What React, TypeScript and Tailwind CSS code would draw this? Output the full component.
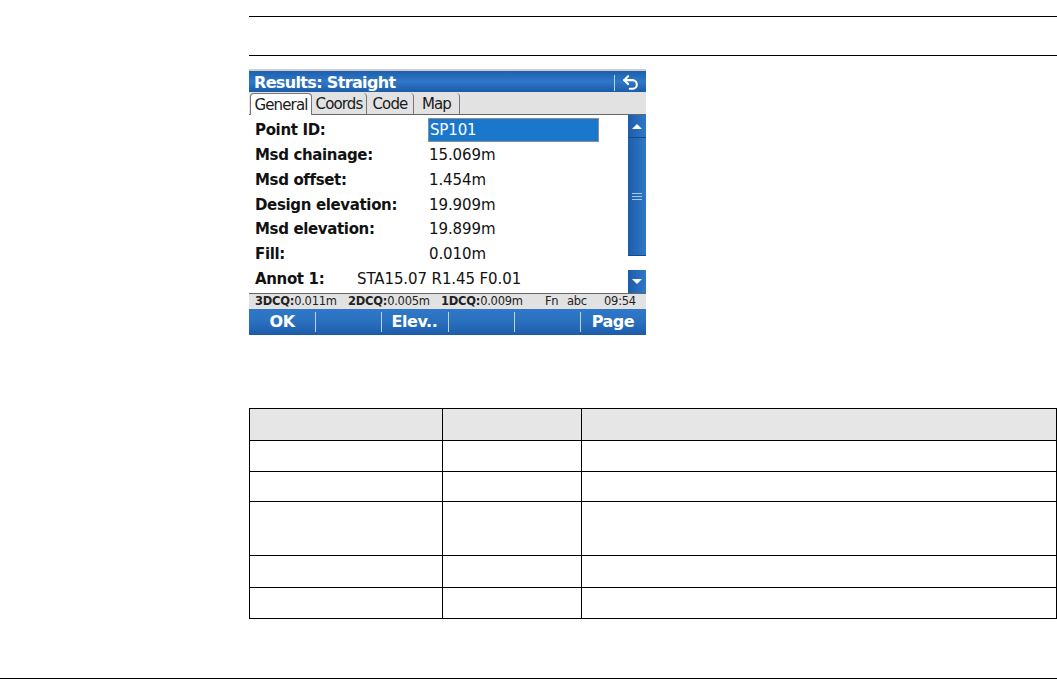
import { Undo2 } from "lucide-react";

const rows = [
  { label: "Point ID:", value: "" },
  { label: "Msd chainage:", value: "15.069m" },
  { label: "Msd offset:", value: "1.454m" },
  { label: "Design elevation:", value: "19.909m" },
  { label: "Msd elevation:", value: "19.899m" },
  { label: "Fill:", value: "0.010m" },
];

const softkeys = ["OK", "", "Elev..", "", "", "Page"];
const tabs = [
  { name: "Coords", width: "w-[55px]" },
  { name: "Code", width: "w-[47px]" },
  { name: "Map", width: "w-[46px]" },
];
const tableRows = ["h-[31px]", "h-[30px]", "h-[54px]", "h-[32px]", "h-[31px]"];

function Device() {
  return (
    <div className="w-[397px] h-[266px] flex flex-col bg-white font-['DejaVu_Sans',sans-serif]">
      <div className="h-[23px] flex items-center justify-between pl-[5px] pt-[2px] bg-gradient-to-b from-[#1d5fae] via-[#2f78c8] to-[#1b5ba8] text-white text-[16px] font-bold border-t-2 border-[#cfcfcf]">
        <span className="tracking-[-0.65px]">Results: Straight</span>
        <div className="flex items-center h-full">
          <div className="w-px h-[16px] bg-[#b8d4f0]" />
          <Undo2 className="w-[21px] h-[19px] mx-[5px] text-white" strokeWidth={2.6} />
        </div>
      </div>

      <div className="h-[23px] flex items-end bg-[#e2e2e2] border-b border-[#666666] pl-[1px] text-[15px] text-[#1a1a1a] tracking-[-0.85px]">
        <div className="w-[62px] h-[22px] -mb-px pt-[2px] flex items-center justify-center bg-white border border-b-0 border-[#777777] rounded-t-[4px]">
          General
        </div>
        {tabs.map((tab) => (
          <div
            key={tab.name}
            className={`${tab.width} h-[21px] pt-[2px] flex items-center justify-center border-r border-[#777777] rounded-tr-[4px]`}
          >
            {tab.name}
          </div>
        ))}
      </div>

      <div className="h-[178px] flex">
        <div className="w-[379px] pt-[3px] text-[#111111]">
          {rows.map((row, i) => (
            <div key={row.label} className="h-[24.8px] flex items-center pl-[6px] text-[15px]">
              <span className="w-[173px] font-bold tracking-[-0.35px]">{row.label}</span>
              {i === 0 ? (
                <div className="w-[171px] h-[24px] pl-[1px] flex items-center bg-[#1a78cc] border border-[#8a8f96] text-white text-[15px] tracking-[-0.15px]">
                  SP101
                </div>
              ) : (
                <span className="pl-[1px] tracking-[-0.1px]">{row.value}</span>
              )}
            </div>
          ))}
          <div className="h-[24.8px] flex items-center pl-[6px] text-[15px]">
            <span className="w-[102px] font-bold tracking-[-0.35px]">Annot 1:</span>
            <span className="tracking-[-0.1px]">STA15.07 R1.45 F0.01</span>
          </div>
        </div>

        <div className="w-[18px] flex flex-col">
          <div className="h-[23px] flex items-center justify-center bg-gradient-to-r from-[#1c5dab] to-[#2f78c8] border-b border-[#164a8a]">
            <div className="w-0 h-0 border-x-[5px] border-x-transparent border-b-[5px] border-b-white" />
          </div>
          <div className="h-[118px] flex flex-col items-center justify-center gap-[2px] bg-gradient-to-r from-[#1c5dab] to-[#2f78c8] border-b border-[#164a8a]">
            <div className="w-[10px] h-px bg-[#a9c9ea]" />
            <div className="w-[10px] h-px bg-[#a9c9ea]" />
            <div className="w-[10px] h-px bg-[#a9c9ea]" />
          </div>
          <div className="h-[14px] bg-white" />
          <div className="flex-1 flex items-center justify-center bg-gradient-to-r from-[#1c5dab] to-[#2f78c8]">
            <div className="w-0 h-0 border-x-[5px] border-x-transparent border-t-[5px] border-t-white" />
          </div>
        </div>
      </div>

      <div className="h-[16px] flex items-center pl-[6px] bg-[#e2e2e2] border-t border-[#666666] text-[11.5px] text-[#222222] tracking-[-0.25px] whitespace-nowrap">
        <span className="w-[93px]">
          <b>3DCQ:</b>0.011m
        </span>
        <span className="w-[93px]">
          <b>2DCQ:</b>0.005m
        </span>
        <span className="w-[104px]">
          <b>1DCQ:</b>0.009m
        </span>
        <span className="w-[22px]">Fn</span>
        <span className="w-[37px]">abc</span>
        <span>09:54</span>
      </div>

      <div className="flex-1 flex bg-gradient-to-b from-[#2f78c8] via-[#2a70bf] to-[#1b5ba8] text-white text-[16px] font-bold">
        {softkeys.map((key, i) => (
          <div key={i} className="flex-1 flex items-center justify-center relative tracking-[-0.45px]">
            {key}
            {i < softkeys.length - 1 && (
              <div className="absolute -right-px top-[3px] bottom-[3px] w-px bg-[#b8d4f0]" />
            )}
          </div>
        ))}
      </div>
    </div>
  );
}

export default function App() {
  return (
    <div className="h-[679px] w-[1057px] flex flex-col bg-white overflow-hidden">
      <div className="flex-1 pl-[249px] pt-[16px]">
        <div className="h-[40px] border-y border-black" />
        <div className="mt-[13px]">
          <Device />
        </div>
        <table className="mt-[73px] w-[808px] table-fixed border-collapse">
          <colgroup>
            <col className="w-[193px]" />
            <col className="w-[139px]" />
            <col />
          </colgroup>
          <tbody>
            <tr className="h-[32px] bg-[#e6e6e6]">
              <td className="border border-black" />
              <td className="border border-black" />
              <td className="border border-black" />
            </tr>
            {tableRows.map((height, i) => (
              <tr key={i} className={height}>
                <td className="border border-black" />
                <td className="border border-black" />
                <td className="border border-black" />
              </tr>
            ))}
          </tbody>
        </table>
      </div>
      <div className="h-px bg-black" />
    </div>
  );
}
